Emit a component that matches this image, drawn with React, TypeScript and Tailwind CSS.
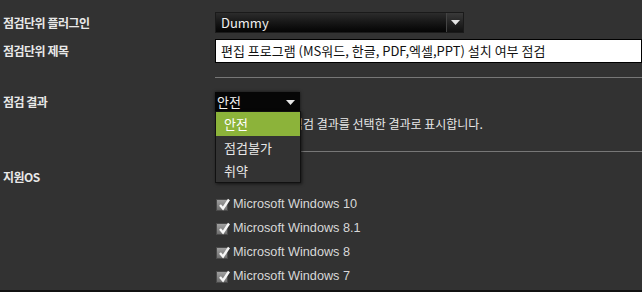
import React from "react";

const font = { fontFamily: '"Noto Sans CJK KR", "Noto Sans", sans-serif' };

function Arrow() {
  return (
    <svg width="9" height="5" viewBox="0 0 9 5">
      <path d="M0 0 H9 L4.5 5 Z" fill="#e6e6e6" />
    </svg>
  );
}

function Check() {
  return (
    <span className="relative flex h-[12px] w-[12px] items-center justify-center border border-[#4a4a4a] bg-gradient-to-b from-[#a0a0a0] to-[#6e6e6e]">
      <svg className="absolute -top-[2px] left-[1px]" width="12" height="13" viewBox="0 0 12 13">
        <path d="M2 7 L5 10.5 L11 1.5" stroke="#f6f6f6" strokeWidth="2.4" fill="none" />
      </svg>
    </span>
  );
}

const osList = ["Microsoft Windows 10", "Microsoft Windows 8.1", "Microsoft Windows 8", "Microsoft Windows 7"];

export default function App() {
  return (
    <div className="h-[292px] w-[642px] overflow-hidden border-b-2 border-[#111] bg-[#323232] text-[#e8e8e8]" style={font}>
      <div className="flex items-center pt-[12px]">
        <div className="w-[215px] pl-[3px] text-[12px] font-bold tracking-[-0.5px]">점검단위 플러그인</div>
        <div className="flex h-[21px] w-[249px] items-center border border-[#1a1a1a] bg-gradient-to-b from-[#2c2c2c] to-[#050505]">
          <span className="flex-1 pl-[5px] text-[13px] text-[#f0f0f0]">Dummy</span>
          <span className="flex h-full w-[17px] items-center justify-center border-l border-[#444] bg-gradient-to-b from-[#3a3a3a] to-[#111]">
            <Arrow />
          </span>
        </div>
      </div>

      <div className="mt-[6px] flex items-center">
        <div className="w-[215px] pl-[3px] text-[12px] font-bold tracking-[-0.5px]">점검단위 제목</div>
        <div className="flex h-[24px] flex-1 items-center border border-[#000] bg-white pl-[5px] text-[13px] text-[#111]">
          편집 프로그램 (MS워드, 한글, PDF,엑셀,PPT) 설치 여부 점검
        </div>
      </div>

      <div className="ml-[215px] mt-[14px] h-px bg-[#777]" />

      <div className="relative mt-[14px]">
        <div className="flex items-center">
          <div className="w-[215px] pl-[3px] text-[12px] font-bold tracking-[-0.5px]">점검 결과</div>
          <div className="flex h-[20px] w-[85px] items-center bg-[#060606] shadow-[0_0_3px_rgba(0,0,0,0.6)]">
            <span className="flex-1 pl-[2px] text-[13px] text-[#f4f4f4]">안전</span>
            <span className="pr-[5px]">
              <Arrow />
            </span>
          </div>
        </div>
        <div className="ml-[292px] mt-[3px] whitespace-nowrap text-[12px] text-[#e8e8e8]">점검 결과를 선택한 결과로 표시합니다.</div>
        <div className="ml-[215px] mt-[18px] h-px bg-[#777]" />

        <ul className="absolute left-[215px] top-[19px] w-[86px] border border-[#111] bg-[#333] text-[13px] text-[#e8e8e8] shadow-[1px_1px_3px_rgba(0,0,0,0.6)]">
          <li className="flex h-[24px] items-center bg-[#8cb33a] pl-[8px] text-[#fff]">안전</li>
          <li className="flex h-[23px] items-center pl-[8px]">점검불가</li>
          <li className="flex h-[23px] items-center pl-[8px]">취약</li>
        </ul>
      </div>

      <div className="mt-[16px] pl-[3px] text-[12px] font-bold tracking-[-0.5px]">지원OS</div>

      <div className="ml-[216px] mt-[13px] flex flex-col gap-[12px]">
        {osList.map((os) => (
          <div key={os} className="flex h-[12px] items-center gap-[5px]">
            <Check />
            <span className="text-[12.7px] text-[#d8d8d8]" style={{ fontFamily: '"Liberation Sans", Arial, sans-serif' }}>
              {os}
            </span>
          </div>
        ))}
      </div>
    </div>
  );
}
